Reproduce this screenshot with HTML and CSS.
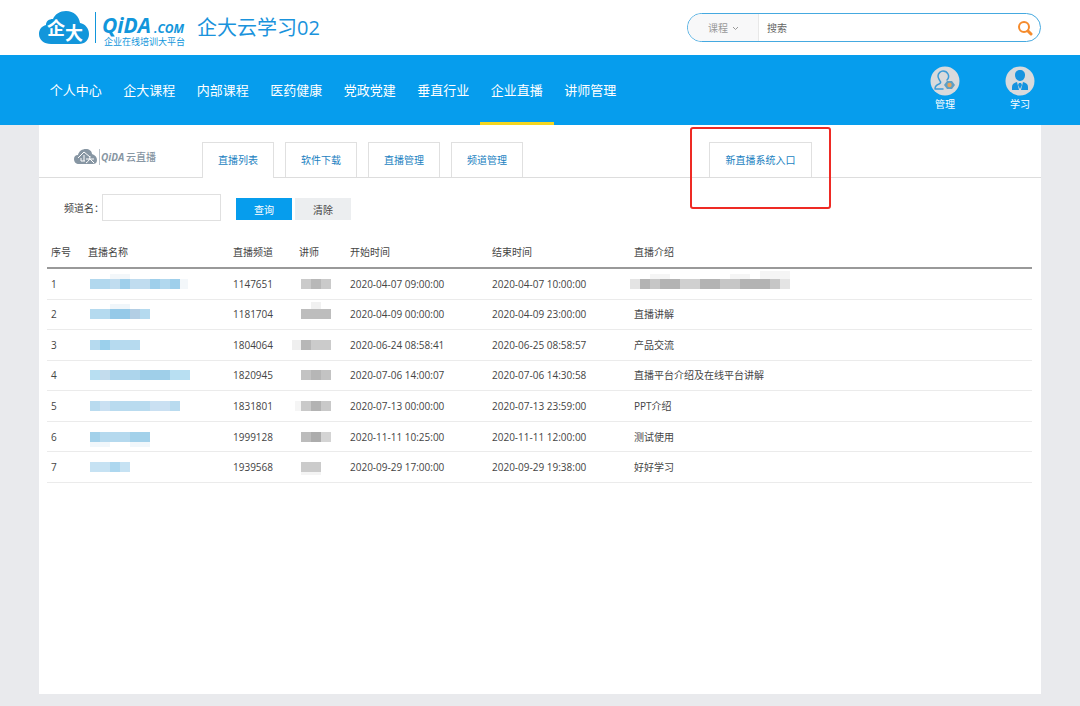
FILE: index.html
```html
<!DOCTYPE html>
<html lang="zh-CN">
<head>
  <meta charset="UTF-8">
  <meta name="viewport" content="width=device-width, initial-scale=1.0">
  <title>企大云学习02</title>
  <link rel="stylesheet" href="styles.css">
</head>
<body>

  <!-- 顶部 -->
  <header class="header">
    <a href="#" class="brand">
      <svg class="logo" width="150" height="36" viewBox="0 0 150 36">
        <path d="M12 34C5 34 0 30 0 24c0-5 3-8 7-9 0-4 3-6 7-6C16 4 21 1 27 1c8 0 13 5 14 12 5 1 9 5 9 11 0 6-4 10-10 10z" fill="#1296db"/>
        <text x="8" y="25" font-size="18" font-weight="700" fill="#fff">企<tspan dy="5">大</tspan></text>
        <path d="M56.500 2v31" stroke="#1296db"/>
        <text class="logo-name" x="63" y="23" font-size="21" fill="#1296db">QiDA</text>
        <text class="logo-name" x="115" y="23" font-size="12" fill="#1296db">.COM</text>
        <text x="65" y="35" font-size="9" fill="#1296db">企业在线培训大平台</text>
      </svg>
      <span class="site-name">企大云学习02</span>
    </a>
    <form class="search">
      <select class="search-type" aria-label="搜索类型">
        <option>课程</option>
      </select>
      <input class="search-text" type="text" placeholder="搜索" aria-label="搜索">
      <button class="search-btn" type="button" aria-label="搜索">
        <svg width="16" height="16" viewBox="0 0 16 16" fill="none" stroke="#f58b2c">
          <circle cx="7" cy="7" r="5" stroke-width="2"/>
          <path d="M11 11L14 14" stroke-width="3" stroke-linecap="round"/>
        </svg>
      </button>
    </form>
  </header>

  <!-- 主导航 -->
  <nav class="nav">
    <div class="nav-list">
      <a href="#">个人中心</a>
      <a href="#">企大课程</a>
      <a href="#">内部课程</a>
      <a href="#">医药健康</a>
      <a href="#">党政党建</a>
      <a href="#">垂直行业</a>
      <a href="#" class="active">企业直播</a>
      <a href="#">讲师管理</a>
    </div>
    <div class="nav-user">
      <a href="#">
        <svg width="30" height="30" viewBox="0 0 30 30" fill="none">
          <circle cx="15" cy="15" r="14.500" fill="#d9dadc"/>
          <path d="M17 14c2-2 2-4 1-6-1-2-3-3-5-3s-5 2-5 5c0 2 1 3 2 5 1 1 1 2-1 3-3 1-4 3-4 5h8" stroke="#3d9bd6" stroke-width="1.500" stroke-linecap="round" stroke-linejoin="round"/>
          <path d="M17 15h5l3 4-3 4h-5l-3-4z" fill="#5f9fc4"/>
          <circle cx="19.500" cy="19" r="2.200" fill="#e6a45c"/>
        </svg>
        管理
      </a>
      <a href="#">
        <svg width="30" height="30" viewBox="0 0 30 30">
          <circle cx="15" cy="15" r="14.500" fill="#d9dadc"/>
          <path d="M15 4c3 0 5 2 5 5s-2 6-5 6-5-3-5-6 2-5 5-5z" fill="#1593df"/>
          <path d="M7 24v-3c0-3 2-4 5-5l2 8zM23 24v-3c0-3-2-4-5-5l-2 8zM14 17h2l1 2-2 4-2-4z" fill="#1593df"/>
        </svg>
        学习
      </a>
    </div>
  </nav>

  <main class="panel">
    <!-- 标签页 -->
    <div class="tabs">
      <svg class="live-logo" width="84" height="20" viewBox="0 0 84 20">
        <path d="M5 17C2 17 0 15 0 12c0-2 1-4 4-4 1-4 4-6 8-6 3 0 6 2 6 5 3 1 5 3 5 6s-2 4-4 4z" fill="#8796a3"/>
        <path d="M4 11l6-6 6 5M7 11v3h4M10 8v6M12 12h8M16 9c0 3-1 5-4 7M16 12l4 4" stroke="#fff" fill="none"/>
        <path d="M25.500 2v16" stroke="#b9c2ca"/>
        <text class="logo-name" x="27" y="14" font-size="10" fill="#8796a3">QiDA</text>
        <text x="52" y="14" font-size="10" font-weight="500" fill="#8796a3">云直播</text>
      </svg>
      <a href="#" class="tab active">直播列表</a>
      <a href="#" class="tab">软件下载</a>
      <a href="#" class="tab">直播管理</a>
      <a href="#" class="tab">频道管理</a>
      <a href="#" class="tab tab-new">新直播系统入口</a>
    </div>

    <!-- 查询 -->
    <form class="filter">
      <label for="channel">频道名：</label>
      <input type="text" id="channel" name="channel">
      <button type="button" class="btn btn-primary">查询</button>
      <button type="reset" class="btn">清除</button>
    </form>

    <!-- 直播列表 -->
    <table class="list">
      <colgroup>
        <col class="c-no"><col class="c-name"><col class="c-channel"><col class="c-teacher"><col class="c-time"><col class="c-time"><col>
      </colgroup>
      <thead>
        <tr><th>序号</th><th>直播名称</th><th>直播频道</th><th>讲师</th><th>开始时间</th><th>结束时间</th><th>直播介绍</th></tr>
      </thead>
      <tbody>
        <tr>
          <td>1</td>
          <td><svg class="mosaic" width="110" height="20"><path d="M22 0h20v5H22zM92 5h8v10h-8z" fill="#f3f7fa"/><path d="M2 5h90v10H2z" fill="#b2d8ee"/><path d="M22 5h10v10H22zM42 5h20v10H42z" fill="#c0dcef"/><path d="M32 5h10v10H32zM62 5h10v10H62zM82 5h10v10H82z" fill="#9fcfeb"/></svg></td>
          <td>1147651</td>
          <td><svg class="mosaic" width="40" height="20"><path d="M2 5h30v10H2z" fill="#cacaca"/><path d="M12 5h10v10H12z" fill="#b8b8b8"/></svg></td>
          <td>2020-04-07 09:00:00</td>
          <td>2020-04-07 10:00:00</td>
          <td><svg class="mosaic mosaic-wide" width="164" height="20"><path d="M20 0h20v5H20zM100 0h20v5h-20zM130-3h30v8h-30z" fill="#f5f5f5"/><path d="M0 5h160v10H0z" fill="#e4e4e4"/><path d="M10 5h140v10H10z" fill="#c6c6c6"/><path d="M10 5h10v10H10zM30 5h20v10H30zM70 5h20v10H70zM110 5h30v10h-30z" fill="#b3b3b3"/><path d="M50 5h20v10H50z" fill="#d0d0d0"/></svg></td>
        </tr>
        <tr>
          <td>2</td>
          <td><svg class="mosaic" width="110" height="20"><path d="M22 0h20v5H22z" fill="#f0f6fa"/><path d="M2 5h60v10H2z" fill="#b5daef"/><path d="M22 5h20v10H22z" fill="#95c9e8"/><path d="M42 5h10v10H42z" fill="#b3cee4"/></svg></td>
          <td>1181704</td>
          <td><svg class="mosaic" width="40" height="20"><path d="M12-2h10v7H12z" fill="#f1f1f1"/><path d="M2 5h30v10H2z" fill="#bdbdbd"/></svg></td>
          <td>2020-04-09 00:00:00</td>
          <td>2020-04-09 23:00:00</td>
          <td>直播讲解</td>
        </tr>
        <tr>
          <td>3</td>
          <td><svg class="mosaic" width="110" height="20"><path d="M2 5h50v10H2z" fill="#b6daef"/><path d="M12 5h10v10H12z" fill="#9bd0ec"/></svg></td>
          <td>1804064</td>
          <td><svg class="mosaic" width="40" height="20"><path d="M-7 5h9v10h-9z" fill="#efefef"/><path d="M2 5h30v10H2z" fill="#cbcbcb"/><path d="M2 5h10v10H2z" fill="#b7b7b7"/></svg></td>
          <td>2020-06-24 08:58:41</td>
          <td>2020-06-25 08:58:57</td>
          <td>产品交流</td>
        </tr>
        <tr>
          <td>4</td>
          <td><svg class="mosaic" width="110" height="20"><path d="M2 5h100v10H2z" fill="#b8dff2"/><path d="M12 5h10v10H12z" fill="#c3dced"/><path d="M22 5h30v10H22z" fill="#add5ec"/><path d="M52 5h30v10H52z" fill="#9fcfe9"/></svg></td>
          <td>1820945</td>
          <td><svg class="mosaic" width="40" height="20"><path d="M2 5h30v10H2z" fill="#c3c3c3"/><path d="M12 5h10v10H12z" fill="#b6b6b6"/></svg></td>
          <td>2020-07-06 14:00:07</td>
          <td>2020-07-06 14:30:58</td>
          <td>直播平台介绍及在线平台讲解</td>
        </tr>
        <tr>
          <td>5</td>
          <td><svg class="mosaic" width="110" height="20"><path d="M2 5h90v10H2z" fill="#b9dbef"/><path d="M12 5h10v10H12zM62 5h20v10H62z" fill="#cae0f2"/></svg></td>
          <td>1831801</td>
          <td><svg class="mosaic" width="40" height="20"><path d="M-4 5h6v10h-6z" fill="#f5f5f5"/><path d="M2 5h30v10H2z" fill="#c9c9c9"/><path d="M12 5h10v10H12z" fill="#b3b3b3"/></svg></td>
          <td>2020-07-13 00:00:00</td>
          <td>2020-07-13 23:59:00</td>
          <td>PPT介绍</td>
        </tr>
        <tr>
          <td>6</td>
          <td><svg class="mosaic" width="110" height="20"><path d="M2 15h20v5H2zM42 15h20v5H42z" fill="#f1f7fb"/><path d="M2 5h60v10H2z" fill="#b5d9ee"/><path d="M2 5h10v10H2zM42 5h20v10H42z" fill="#a3d1ea"/></svg></td>
          <td>1999128</td>
          <td><svg class="mosaic" width="40" height="20"><path d="M2 5h30v10H2z" fill="#bcbcbc"/><path d="M12 5h10v10H12z" fill="#acacac"/><path d="M22 5h10v10H22z" fill="#d4d4d4"/></svg></td>
          <td>2020-11-11 10:25:00</td>
          <td>2020-11-11 12:00:00</td>
          <td>测试使用</td>
        </tr>
        <tr>
          <td>7</td>
          <td><svg class="mosaic" width="110" height="20"><path d="M2 5h40v10H2z" fill="#c6e2f3"/><path d="M22 5h10v10H22z" fill="#add7ef"/></svg></td>
          <td>1939568</td>
          <td><svg class="mosaic" width="40" height="20"><path d="M2 15h20v3H2z" fill="#f4f4f4"/><path d="M2 5h20v10H2z" fill="#cbcbcb"/></svg></td>
          <td>2020-09-29 17:00:00</td>
          <td>2020-09-29 19:38:00</td>
          <td>好好学习</td>
        </tr>
      </tbody>
    </table>
  </main>

</body>
</html>
```
FILE: styles.css
```css
*,
*::after {
  box-sizing: border-box;
}

body {
  display: flex;
  flex-direction: column;
  min-height: 100vh;
  margin: 0;
  font-family: "Open Sans", "Noto Sans CJK SC", sans-serif;
  font-size: 10px;
  color: #444;
  background-color: #e9eaed;
}

a {
  color: #1a7fc1;
  text-decoration: none;
}

input, select, button {
  font-family: inherit;
  font-size: 10px;
  color: #444;
  border: none;
  border-radius: 0;
  outline: none;
}

button {
  padding: 0;
  cursor: pointer;
}

/* 顶部 */
.header {
  display: flex;
  align-items: center;
  justify-content: space-between;
  height: 55px;
  padding: 0 39px;
  background-color: #fff;
}

.brand {
  display: flex;
  align-items: center;
  gap: 8px;
}

.logo {
  overflow: visible;
}

.logo-name {
  font-family: "Open Sans", sans-serif;
  font-weight: 700;
  font-style: italic;
}

.site-name {
  font-size: 20px;
  line-height: 28px;
  color: #1a93dc;
}

.search {
  display: flex;
  width: 354px;
  height: 29px;
  border: 1px solid #45a9e0;
  border-radius: 15px;
  background-color: #fff;
  overflow: hidden;
}

.search-type {
  appearance: none;
  width: 71px;
  padding: 0 20px;
  color: #999;
  border-right: 1px solid #e8e8e8;
  background: #f8f8f9 url("data:image/svg+xml,%3Csvg xmlns='http://www.w3.org/2000/svg' width='7' height='5'%3E%3Cpath d='M1 1l2.500 2.500L6 1' fill='none' stroke='%23999'/%3E%3C/svg%3E") no-repeat 44px 12px;
}

.search-text {
  flex: 1;
  min-width: 0;
  padding: 0 8px;
}

.search-text::placeholder {
  color: #666;
}

.search-btn {
  display: flex;
  align-items: center;
  justify-content: center;
  width: 30px;
  background: none;
}

/* 主导航 */
.nav {
  display: flex;
  justify-content: space-between;
  height: 70px;
  padding: 0 39px;
  background-color: #069ded;
}

.nav a {
  color: #fff;
}

.nav-list {
  display: grid;
  grid-template-columns: repeat(8, 1fr);
  width: 588px;
}

.nav-list a {
  font-size: 13px;
  line-height: 70px;
  text-align: center;
}

.nav-list .active {
  box-shadow: inset 0 -3px #f5d61f;
}

.nav-user {
  display: flex;
  gap: 45px;
  padding: 11px 6px 0 0;
}

.nav-user a {
  display: flex;
  flex-direction: column;
  align-items: center;
  width: 30px;
  line-height: 16px;
}

/* 内容区 */
.panel {
  flex: 1;
  margin: 0 39px 12px;
  background-color: #fff;
}

.tabs {
  display: flex;
  align-items: flex-end;
  gap: 11px;
  height: 53px;
  padding-left: 35px;
  border-bottom: 1px solid #ddd;
}

.live-logo {
  margin: 0 33px 10px 0;
}

.tab {
  width: 72px;
  height: 35px;
  line-height: 34px;
  text-align: center;
  border: 1px solid #e0e0e0;
  border-bottom: none;
}

.tab.active {
  height: 36px;
  margin-bottom: -1px;
  background-color: #fff;
}

.tab-new {
  position: relative;
  width: 103px;
  margin-left: 175px;
}

/* 新入口的红色标注框 */
.tab-new::after {
  content: "";
  position: absolute;
  top: -16px;
  left: -20px;
  width: 141px;
  height: 82px;
  border: 2px solid #ee2a24;
  border-radius: 3px;
}

/* 查询 */
.filter {
  display: flex;
  align-items: center;
  height: 59px;
  padding: 0 0 0 25px;
}

.filter label {
  width: 38px;
  white-space: nowrap;
}

.filter input {
  width: 119px;
  height: 27px;
  margin-right: 15px;
  padding: 0 6px;
  border: 1px solid #e0e0e0;
}

.btn {
  width: 56px;
  height: 22px;
  margin: 3px 3px 0 0;
  background-color: #eceef0;
}

.btn-primary {
  color: #fff;
  background-color: #069ded;
}

/* 直播列表 */
.list {
  width: calc(100% - 17px);
  height: 246px;
  margin-left: 8px;
  table-layout: fixed;
  border-collapse: separate;
  border-spacing: 0;
}

.list th,
.list td {
  height: 30px;
  padding: 0 4px;
  font-weight: 400;
  line-height: 16px;
  text-align: left;
  white-space: nowrap;
  border-bottom: 1px solid #ebebeb;
}

.list thead th {
  height: 32px;
  border-bottom: 2px solid #999;
}

.c-no {
  width: 37px;
}

.c-name {
  width: 145px;
}

.c-channel {
  width: 66px;
}

.c-teacher {
  width: 51px;
}

.c-time {
  width: 142px;
}

.mosaic {
  display: block;
  overflow: visible;
}

.mosaic-wide {
  margin-left: -4px;
}
```
